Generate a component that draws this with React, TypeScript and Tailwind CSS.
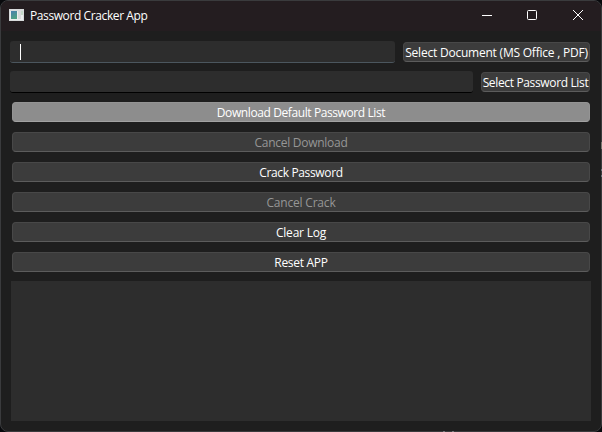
import type { ReactNode } from "react";

function AppIcon() {
  return (
    <svg width="15" height="12" viewBox="0 0 15 12" shapeRendering="crispEdges">
      <defs>
        <linearGradient id="pane" x1="0" y1="0" x2="0.4" y2="1">
          <stop offset="0" stopColor="#4a7fb0" />
          <stop offset="1" stopColor="#4fa083" />
        </linearGradient>
      </defs>
      <rect width="15" height="12" fill="#d8dadb" />
      <rect x="1" y="2" width="13" height="9" fill="#eceeee" />
      <rect x="2" y="2" width="6" height="8" fill="url(#pane)" />
      <rect x="9" y="2" width="3" height="8" fill="#d9dadb" />
      <rect x="12" y="2" width="2" height="4" fill="#c4d8c8" />
    </svg>
  );
}

function PushButton({
  children,
  look = "normal",
  size = "w-full",
  spacing = "tracking-normal",
}: {
  children: ReactNode;
  look?: "normal" | "disabled" | "hover";
  size?: string;
  spacing?: string;
}) {
  const looks = {
    normal: "border-[#484848] border-b-[#5c5c5c] bg-[#3c3c3c] text-white",
    disabled: "border-[#484848] border-b-[#5c5c5c] bg-[#3c3c3c] text-[#969696]",
    hover: "border-[#949494] border-b-[#a2a2a2] bg-[#8d8d8d] text-white",
  };
  return (
    <button
      className={`flex h-5 shrink-0 items-center justify-center rounded border pt-0.5 text-[12px] leading-4 whitespace-nowrap ${size} ${spacing} ${looks[look]}`}
    >
      {children}
    </button>
  );
}

export default function App() {
  return (
    <div className="relative h-[432px] w-[602px] bg-[#08090c] font-['Open_Sans','Noto_Sans',sans-serif]">
      <div className="flex h-full flex-col overflow-hidden rounded-lg border border-[#3a3b3d] bg-[#1e1e1e]">
        <header className="flex h-[30px] shrink-0 items-center bg-[#241d20] pb-0.5 pl-2 text-white">
          <AppIcon />
          <span className="ml-1.5 pt-0.5 text-[12px] leading-4 tracking-[-0.4px]">Password Cracker App</span>
          <div className="mr-[18px] ml-auto flex items-center">
            <svg width="10" height="10" className="mr-[35px]" shapeRendering="crispEdges">
              <path d="M0 5.5h10" stroke="#fff" />
            </svg>
            <svg width="10" height="10" className="mr-9" fill="none" stroke="#fff">
              <rect x="0.5" y="0.5" width="9" height="9" rx="1" />
            </svg>
            <svg width="10" height="10" stroke="#fff">
              <path d="M0 0L10 10M10 0L0 10" />
            </svg>
          </div>
        </header>

        <main className="flex flex-1 flex-col pt-2.5 pr-[11px] pl-[9px]">
          <div className="flex h-[22px] items-center gap-2">
            <div className="flex h-[22px] flex-1 items-center rounded-[3px] border-b border-[#4b565e] bg-[#2d2d2d] pl-2.5">
              <span className="h-4 w-px bg-white" />
            </div>
            <PushButton size="w-[187px]" spacing="tracking-[-0.22px]">Select Document (MS Office , PDF)</PushButton>
          </div>
          <div className="mt-2 flex h-[22px] items-center gap-2">
            <div className="h-[22px] flex-1 rounded-[3px] border-b border-black bg-[#2d2d2d]" />
            <PushButton size="w-[109px]" spacing="tracking-[-0.35px]">Select Password List</PushButton>
          </div>
          <div className="mt-[9px] flex flex-col gap-2.5 pl-0.5">
            <PushButton look="hover" spacing="tracking-[-0.4px]">Download Default Password List</PushButton>
            <PushButton look="disabled" spacing="tracking-[-0.27px]">Cancel Download</PushButton>
            <PushButton spacing="tracking-[-0.36px]">Crack Password</PushButton>
            <PushButton look="disabled" spacing="tracking-[-0.2px]">Cancel Crack</PushButton>
            <PushButton spacing="tracking-[-0.22px]">Clear Log</PushButton>
            <PushButton spacing="tracking-[-0.3px]">Reset APP</PushButton>
          </div>
          <div className="mt-[9px] -mr-px ml-px h-[140px] bg-[#2d2d2d]" />
        </main>
      </div>
      {/* Desktop content showing past the window's edges */}
      <span className="absolute top-[142px] right-0 h-[7px] w-px bg-[#77756e]" />
      <span className="absolute top-[169px] right-0 h-0.5 w-px bg-[#6b737c]" />
      <span className="absolute top-[175px] right-0 h-0.5 w-px bg-[#6b737c]" />
      <span className="absolute bottom-0 left-[443px] h-px w-0.5 bg-[#77777a]" />
      <span className="absolute bottom-0 left-[452px] h-px w-0.5 bg-[#77777a]" />
    </div>
  );
}
